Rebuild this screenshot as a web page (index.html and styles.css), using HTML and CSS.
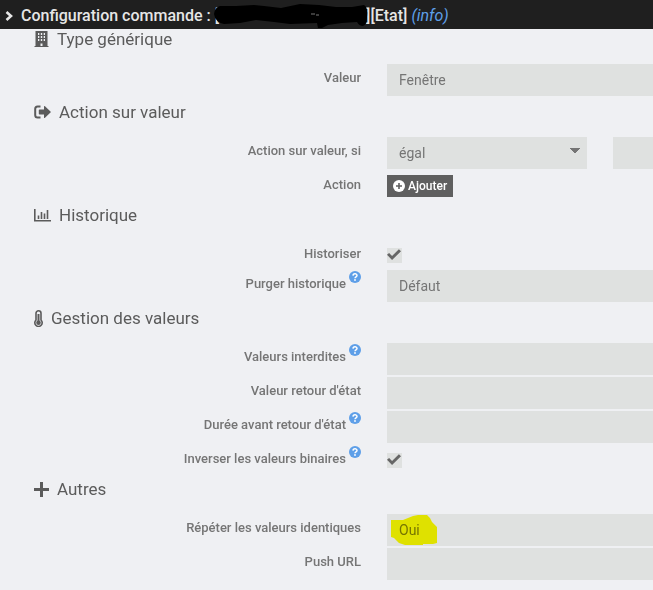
FILE: index.html
```html
<!DOCTYPE html>
<html lang="fr">
<head>
<meta charset="utf-8">
<title>Configuration commande</title>
<link rel="stylesheet" href="styles.css">
</head>
<body>
<header class="titlebar">
  <svg class="chevron" viewBox="0 0 8 10" aria-hidden="true"><path d="M1.500 1 6 5 1.500 9" fill="none" stroke="currentColor" stroke-width="2.600"/></svg>
  <h1 class="title">Configuration commande : [<span class="masked"><svg class="scribble" viewBox="0 0 154 24" aria-hidden="true"><path d="M0 10Q1 3 6 2L22 2 40 1 50 2 67 4 86 0 105 1 122 3 138 3 150 1Q154 3 153 13 153 21 149 22 145 22 143 18L128 19 114 21 108 24 104 24 103 19 76 20 60 18 42 16 26 19 10 20Q1 18 0 10Z"/><path d="M97 10h4M102 11h3" stroke="#777" stroke-width="1"/></svg></span>][Etat] <em class="kind">(info)</em></h1>
</header>
<main>
<form class="form">
  <section>
    <h2 class="legend"><svg class="icon-building" viewBox="0 0 14 16" aria-hidden="true"><path fill="currentColor" fill-rule="evenodd" d="M1 0h12v15h1v1H0v-1h1zM3.500 2v2h1.300V2zM6.300 2v2h1.400V2zM9.200 2v2h1.300V2zM3.500 5v2h1.300V5zM6.300 5v2h1.400V5zM9.200 5v2h1.300V5zM3.500 8v2h1.300V8zM6.300 8v2h1.400V8zM9.200 8v2h1.300V8zM6 12.500v2.500h2v-2.500z"/></svg>Type générique</h2>
    <div class="row">
      <label class="label" for="type">Valeur</label>
      <div class="field"><select class="control" id="type"><option>Fenêtre</option></select></div>
    </div>
  </section>
  <section>
    <h2 class="legend"><svg class="icon-wide" viewBox="0 0 17 14" aria-hidden="true"><path d="M6.500 1.500H3.500Q1.200 1.500 1.200 4V10Q1.200 12.500 3.500 12.500H6.500" fill="none" stroke="currentColor" stroke-width="2"/><path d="M5.500 4.500H10V1.500Q10 .6 11 1.200L17 7 11 12.800Q10 13.400 10 12.500V9.500H5.500Q4.800 9.500 4.800 8.800V5.200Q4.800 4.500 5.500 4.500Z" fill="currentColor"/></svg>Action sur valeur</h2>
    <div class="row">
      <label class="label" for="operator">Action sur valeur, si</label>
      <div class="field pair"><select class="control arrow" id="operator"><option>égal</option></select><input class="control" type="text" aria-label="Valeur comparée"></div>
    </div>
    <div class="row short">
      <span class="label">Action</span>
      <div class="field"><button class="add" type="button"><svg class="icon-add" viewBox="0 0 12 12" aria-hidden="true"><circle cx="6" cy="6" r="6" fill="#fff"/><path d="M6 3v6M3 6h6" stroke="#5f5f5f" stroke-width="1.600"/></svg>Ajouter</button></div>
    </div>
  </section>
  <section>
    <h2 class="legend"><svg class="icon-wide" viewBox="0 0 17 14" aria-hidden="true"><path d="M.8 1v11.700H17" fill="none" stroke="currentColor" stroke-width="1.600"/><path d="M4.500 7.500v3.500M7.500 4v7M10.500 5.500V11M13.500 2v9" stroke="currentColor" stroke-width="1.600"/></svg>Historique</h2>
    <div class="row short">
      <label class="label" for="history">Historiser</label>
      <div class="field"><input class="check" type="checkbox" id="history" checked></div>
    </div>
    <div class="row">
      <label class="label" for="purge">Purger historique<svg class="help" viewBox="0 0 12 12" aria-hidden="true"><circle cx="6" cy="6" r="6" fill="#5e9fe8"/><path d="M4 4.600C4.100 2.300 8 2.300 8 4.500 8 5.800 6 5.800 6 7.200" fill="none" stroke="#fff" stroke-width="1.500"/><circle cx="6" cy="9" r=".9" fill="#fff"/></svg></label>
      <div class="field"><select class="control" id="purge"><option>Défaut</option></select></div>
    </div>
  </section>
  <section>
    <h2 class="legend"><svg class="icon-thermo" viewBox="0 0 9 17" aria-hidden="true"><path d="M2 3.300a2.500 2.500 0 0 1 5 0V10a3.700 3.700 0 1 1-5 0Z" fill="none" stroke="currentColor" stroke-width="1.600"/><circle cx="4.500" cy="12.700" r="2.300" fill="currentColor"/><path d="M4.500 4v8" stroke="currentColor" stroke-width="2"/></svg>Gestion des valeurs</h2>
    <div class="row">
      <label class="label" for="forbidden">Valeurs interdites<svg class="help" viewBox="0 0 12 12" aria-hidden="true"><circle cx="6" cy="6" r="6" fill="#5e9fe8"/><path d="M4 4.600C4.100 2.300 8 2.300 8 4.500 8 5.800 6 5.800 6 7.200" fill="none" stroke="#fff" stroke-width="1.500"/><circle cx="6" cy="9" r=".9" fill="#fff"/></svg></label>
      <div class="field"><input class="control" type="text" id="forbidden"></div>
    </div>
    <div class="row">
      <label class="label" for="return">Valeur retour d'état</label>
      <div class="field"><input class="control" type="text" id="return"></div>
    </div>
    <div class="row">
      <label class="label" for="delay">Durée avant retour d'état<svg class="help" viewBox="0 0 12 12" aria-hidden="true"><circle cx="6" cy="6" r="6" fill="#5e9fe8"/><path d="M4 4.600C4.100 2.300 8 2.300 8 4.500 8 5.800 6 5.800 6 7.200" fill="none" stroke="#fff" stroke-width="1.500"/><circle cx="6" cy="9" r=".9" fill="#fff"/></svg></label>
      <div class="field"><input class="control" type="text" id="delay"></div>
    </div>
    <div class="row short">
      <label class="label" for="invert">Inverser les valeurs binaires<svg class="help" viewBox="0 0 12 12" aria-hidden="true"><circle cx="6" cy="6" r="6" fill="#5e9fe8"/><path d="M4 4.600C4.100 2.300 8 2.300 8 4.500 8 5.800 6 5.800 6 7.200" fill="none" stroke="#fff" stroke-width="1.500"/><circle cx="6" cy="9" r=".9" fill="#fff"/></svg></label>
      <div class="field"><input class="check" type="checkbox" id="invert" checked></div>
    </div>
  </section>
  <section>
    <h2 class="legend"><svg class="icon-plus" viewBox="0 0 15 15" aria-hidden="true"><path d="M7.500 0v15M0 7.500h15" stroke="currentColor" stroke-width="3"/></svg>Autres</h2>
    <div class="row">
      <label class="label" for="repeat">Répéter les valeurs identiques</label>
      <div class="field"><select class="control" id="repeat"><option>Oui</option></select><svg class="marker" viewBox="0 0 46 30" aria-hidden="true"><path d="M0 5H12L22 1 27 0H36L39 3 41 7 46 12V28L42 29H32V30H14L8 28 3 23 0 22Z" fill="#ff0"/></svg></div>
    </div>
    <div class="row">
      <label class="label" for="push">Push URL</label>
      <div class="field"><input class="control" type="text" id="push"></div>
    </div>
  </section>
</form>
</main>
</body>
</html>
```
FILE: styles.css
```css
* {
  box-sizing: border-box;
}

body {
  margin: 0;
  background: #eff0f3;
  color: #757575;
  font-family: Roboto, "Liberation Sans", sans-serif;
  font-size: 14px;
}

.titlebar {
  position: fixed;
  top: 0;
  left: 0;
  right: 0;
  z-index: 2;
  display: flex;
  align-items: center;
  gap: 8px;
  height: 29px;
  padding: 2px 5px 0;
  background: #1f1f1f;
  color: #e6e6e6;
}

.chevron {
  width: 8px;
  height: 10px;
}

.title {
  margin: 0;
  font-size: 16px;
  font-weight: 500;
  line-height: 24px;
  white-space: nowrap;
}

.masked {
  position: relative;
  display: inline-block;
  width: 147px;
  height: 12px;
}

.scribble {
  position: absolute;
  left: -5px;
  top: -5px;
  width: 154px;
  height: 24px;
}

.kind {
  color: #5e9fe8;
  font-weight: 400;
}

/* The form is scrolled slightly beneath the title bar. */
.form {
  padding-top: 25px;
}

.legend {
  display: flex;
  align-items: center;
  gap: 8px;
  height: 28px;
  margin: 0 0 11px;
  padding-left: 34px;
  color: #5b5b5b;
  font-size: 17px;
  font-weight: 400;
}

.icon-building {
  width: 15px;
  height: 16px;
}

.icon-wide {
  width: 17px;
  height: 14px;
}

.icon-thermo {
  width: 9px;
  height: 17px;
}

.icon-plus {
  width: 15px;
  height: 15px;
}

.row {
  display: grid;
  grid-template-columns: 361px minmax(0, 1fr);
  column-gap: 26px;
  min-height: 32px;
  max-height: 32px;
  margin-bottom: 2px;
}

.short {
  min-height: 28px;
}

.label {
  max-height: 32px;
  font-size: 13px;
  font-weight: 500;
  line-height: 28px;
  text-align: right;
}

.help {
  width: 12px;
  height: 12px;
  margin-left: 3px;
  vertical-align: 5px;
}

.field {
  position: relative;
}

.pair {
  display: grid;
  grid-template-columns: 200px minmax(0, 1fr);
  column-gap: 26px;
}

.control {
  display: block;
  width: 100%;
  height: 32px;
  padding: 0 12px;
  border: 0;
  border-radius: 0;
  background: #dfe1e0;
  color: #757575;
  font: inherit;
  appearance: none;
}

.arrow {
  background-image: conic-gradient(from -45deg at 50% 100%, #757575 90deg, transparent 90deg);
  background-position: right 7px top 11px;
  background-repeat: no-repeat;
  background-size: 10px 5px;
}

.add {
  display: flex;
  align-items: center;
  gap: 3px;
  height: 22px;
  margin-top: 4px;
  padding: 0 6px;
  border: 0;
  background: #5f5f5f;
  color: #fff;
  font: 500 12px Roboto, "Liberation Sans", sans-serif;
}

.icon-add {
  width: 12px;
  height: 12px;
}

.check {
  display: block;
  width: 15px;
  height: 15px;
  margin: 8px 0 0;
  background: #dfe1e0;
  appearance: none;
}

.check:checked::before {
  content: "";
  display: block;
  width: 14px;
  height: 13px;
  background: #666;
  clip-path: polygon(0 52%, 15% 38%, 36% 61%, 85% 10%, 100% 25%, 36% 93%);
}

.marker {
  position: absolute;
  left: 4px;
  top: 1px;
  width: 46px;
  height: 30px;
  mix-blend-mode: multiply;
  pointer-events: none;
}
```
